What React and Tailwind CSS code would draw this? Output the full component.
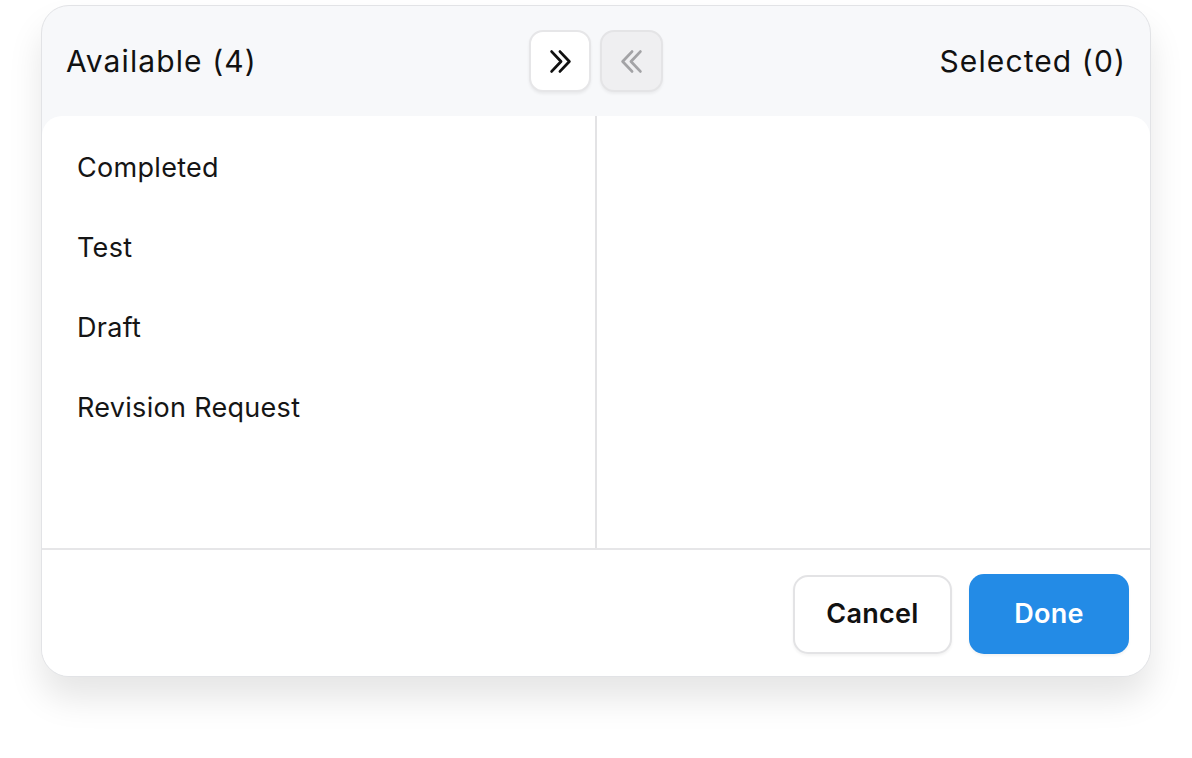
import { useState } from "react"

function Chevrons({ dir = "right", className = "" }) {
  // double chevron, flipped for the left one
  return (
    <svg
      width="25"
      height="25"
      viewBox="0 0 24 24"
      fill="none"
      stroke="currentColor"
      strokeWidth="2.7"
      strokeLinecap="round"
      strokeLinejoin="round"
      className={className}
      style={dir === "left" ? { transform: "scaleX(-1)" } : undefined}
    >
      <path d="M3.5 2.5l9 9.5-9 9.5" />
      <path d="M11.5 2.5l9 9.5-9 9.5" />
    </svg>
  )
}

export default function App() {
  const [available] = useState(["Completed", "Test", "Draft", "Revision Request"])
  const [selected] = useState([])

  return (
    <div className="w-[1192px] h-[758px] bg-white pt-[5px] pl-[41px] font-['Inter','Noto_Sans',sans-serif] text-[#111]">
      <div className="w-[1110px] h-[672px] rounded-[28px] border border-[#e2e3e6] bg-[#f7f8fa] shadow-[0_22px_34px_rgba(0,0,0,0.1)] flex flex-col overflow-hidden">
        {/* header */}
        <div className="h-[110px] shrink-0 flex items-center px-[24px]">
          <div className="flex-1 text-[30px] leading-none tracking-[1.1px]">
            Available ({available.length})
          </div>
          <div className="flex gap-[9px]">
            <button className="w-[62px] h-[62px] rounded-[14px] bg-white border-2 border-[#e6e6e8] shadow-[0_2px_3px_rgba(0,0,0,0.06)] flex items-center justify-center text-[#111]">
              <Chevrons />
            </button>
            <button className="w-[63px] h-[62px] rounded-[14px] bg-[#efeff1] border-2 border-[#e4e4e6] shadow-[0_2px_3px_rgba(0,0,0,0.05)] flex items-center justify-center text-[#a3a3a6]">
              <Chevrons dir="left" />
            </button>
          </div>
          <div className="flex-1 text-right text-[30px] leading-none tracking-[1.1px]">
            Selected ({selected.length})
          </div>
        </div>

        {/* body */}
        <div className="flex-1 bg-white rounded-t-[20px] flex flex-col">
          <div className="h-[434px] flex border-b-2 border-[#e6e6e8]">
            <div className="w-[555px] border-r-2 border-[#e3e3e5] pt-[12px]">
              {available.map((item) => (
                <div key={item} className="h-[80px] flex items-center px-[35px] text-[27px] tracking-[0.3px] text-[#151515]">
                  {item}
                </div>
              ))}
            </div>
            <div className="flex-1"></div>
          </div>

          <div className="flex-1 flex items-center justify-end gap-[17px] pr-[21px] pt-[2px]">
            <button className="w-[159px] h-[79px] rounded-[15px] bg-white border-2 border-[#e3e3e5] shadow-[0_2px_3px_rgba(0,0,0,0.05)] text-[27px] tracking-[0.3px] font-semibold text-[#111]">
              Cancel
            </button>
            <button className="w-[160px] h-[80px] rounded-[15px] bg-[#238be6] text-[27px] tracking-[0.3px] font-semibold text-white shadow-[0_2px_3px_rgba(0,0,0,0.05)]">
              Done
            </button>
          </div>
        </div>
      </div>
    </div>
  )
}
